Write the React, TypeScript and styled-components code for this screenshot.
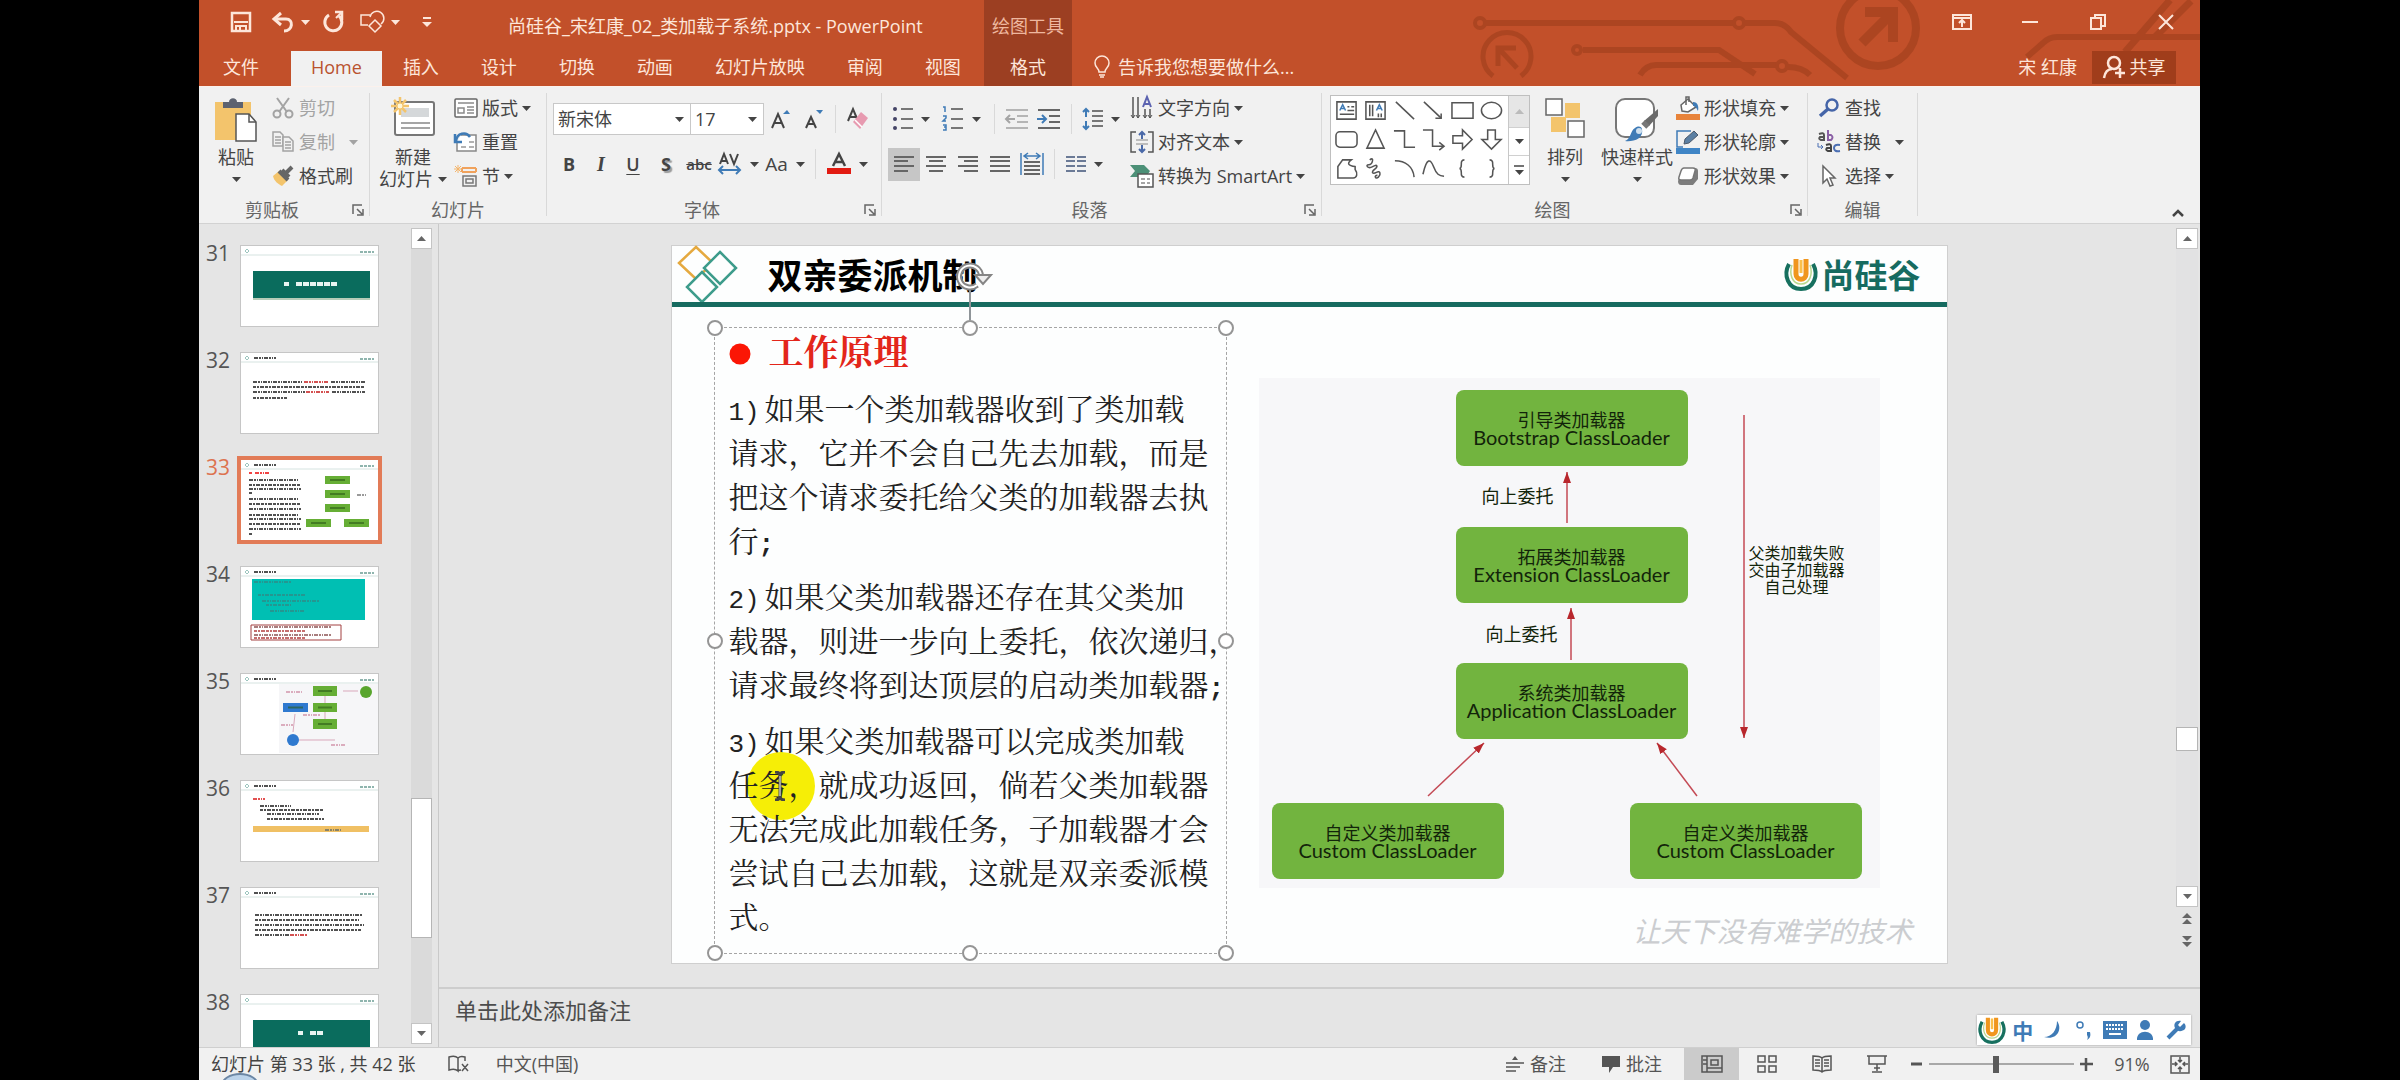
import React from "react";
import styled, { createGlobalStyle, css } from "styled-components";

const UI = `"Open Sans", "Noto Sans CJK SC", sans-serif`;
const CJK = `"Noto Sans CJK SC", sans-serif`;
const SONG = `"Liberation Serif", "Noto Serif CJK SC", "Noto Sans CJK SC", serif`;
const MONO = `"Liberation Mono", monospace`;

const c = {
  brand: "#c2502a",
  brandDark: "#9c3f22",
  share: "#a03d1b",
  onBrand: "#fde6da",
  ribbon: "#f1f1f1",
  ink: "#444444",
  muted: "#a3a3a3",
  line: "#d2d2d2",
  pane: "#e5e5e5",
  blue: "#3f7bb6",
  amber: "#f3c46c",
  teal: "#166b60",
  green: "#72b43f",
};

const Global = createGlobalStyle`
  html, body, #root { margin: 0; height: 100%; }
  body { background: #000; }
  *, *::before, *::after { box-sizing: border-box; }
  button, input, select, textarea {
    font: inherit; color: inherit; margin: 0; padding: 0; border: 0; background: none; border-radius: 0; outline: 0;
  }
`;

const Screen = styled.div`
  height: 100vh;
  padding: 0 200px 0 199px;
  display: flex;
`;
const Window = styled.div`
  flex: 1;
  min-width: 0;
  display: flex;
  flex-direction: column;
  position: relative;
  overflow: hidden;
  background: ${c.ribbon};
  color: ${c.ink};
  font: 18px/24px ${UI};
`;

/* ---------- small shared drawings ---------- */
const Svg = styled.svg`
  display: block;
  flex: none;
  overflow: visible;
  fill: none;
  stroke: currentColor;
`;
const I = ({ w = 24, h = 24, children }: { w?: number; h?: number; children: React.ReactNode }) => (
  <Svg width={w} height={h} viewBox={`0 0 ${w} ${h}`} aria-hidden="true">
    {children}
  </Svg>
);
const Caret = ({ up = false }: { up?: boolean }) => (
  <I w={9} h={5}>
    <path d={up ? "M0 5h9L4.500 0z" : "M0 0h9L4.500 5z"} fill="currentColor" stroke="none" />
  </I>
);

/* ---------- title bar ---------- */
const Header = styled.header`
  position: relative;
  background: ${c.brand};
  color: ${c.onBrand};
  height: 86px;
  display: grid;
  grid-template-columns: 785px 88px 1fr;
  flex: none;
`;
const Circuit = styled.svg`
  position: absolute;
  right: 0;
  top: 0;
  fill: none;
  stroke: #a5421f;
  opacity: 0.75;
`;
const HeaderCol = styled.div<{ $dark?: boolean }>`
  position: relative;
  display: grid;
  grid-template-rows: 51px 35px;
  min-width: 0;
  ${(p) => p.$dark && css`background: ${c.brandDark};`}
`;
const TitleRow = styled.div<{ $end?: boolean; $center?: boolean }>`
  display: flex;
  align-items: center;
  ${(p) => p.$end && css`justify-content: flex-end;`}
  ${(p) => p.$center && css`justify-content: center;`}
`;
const Quick = styled.div`
  display: flex;
  align-items: center;
  padding: 0 0 7px 31px;
  width: 309px;
`;
const QuickBtn = styled.button<{ $w: number }>`
  width: ${(p) => p.$w}px;
  height: 30px;
  display: flex;
  align-items: center;
  gap: 7px;
`;
const DocTitle = styled.h1`
  margin: 0;
  font-size: 18px;
  font-weight: 400;
  line-height: 24px;
  white-space: nowrap;
`;
const ToolsTitle = styled.span`
  color: #eeb79f;
  font-size: 18px;
`;
const WinBtn = styled.button`
  width: 68px;
  height: 44px;
  display: grid;
  place-items: center;
  margin-bottom: 7px;
`;
const Tabs = styled.nav`
  display: flex;
`;
const Tab = styled.button<{ $active?: boolean; $first?: boolean; $wide?: boolean }>`
  padding: 0 21px 3px;
  white-space: nowrap;
  ${(p) => p.$first && css`padding: 0 32px 3px 24px;`}
  ${(p) => p.$wide && css`padding: 0 20px 3px; width: 100%;`}
  ${(p) => p.$active && css`padding: 0 20px 3px; background: ${c.ribbon}; color: #b9532f;`}
`;
const Tell = styled.label`
  display: flex;
  align-items: center;
  gap: 8px;
  padding: 0 0 3px 22px;
`;
const TellInput = styled.input`
  width: 190px;
  &::placeholder { color: ${c.onBrand}; opacity: 1; }
`;
const Account = styled.div`
  margin-left: auto;
  display: flex;
  align-items: stretch;
  padding-right: 24px;
`;
const User = styled.button`
  padding: 0 15px 3px;
`;
const Share = styled.button`
  background: ${c.share};
  width: 84px;
  height: 33px;
  padding-bottom: 2px;
  display: flex;
  align-items: center;
  justify-content: center;
  gap: 5px;
`;

/* ---------- ribbon ---------- */
const Ribbon = styled.section`
  height: 138px;
  flex: none;
  display: flex;
  background: ${c.ribbon};
  border-top: 1px solid #fbf1ec;
  border-bottom: 1px solid ${c.line};
`;
const Rule = styled.i<{ $h?: number }>`
  flex: none;
  width: 1px;
  background: #d9d9d9;
  margin: ${(p) => (p.$h ? "0 6px" : "6px 0 7px")};
  height: ${(p) => (p.$h ? `${p.$h}px` : "auto")};
`;
const Group = styled.div<{ $w: number }>`
  width: ${(p) => p.$w}px;
  flex: none;
  display: flex;
  flex-direction: column;
`;
const Body = styled.div<{ $left: number; $gap?: number }>`
  flex: 1;
  display: flex;
  align-items: flex-start;
  gap: ${(p) => p.$gap ?? 0}px;
  padding: 4px 0 0 ${(p) => p.$left}px;
`;
const Foot = styled.div`
  height: 27px;
  display: flex;
  align-items: center;
  color: #666;
  span { flex: 1; text-align: center; }
`;
const Launcher = styled.button`
  width: 24px;
  height: 24px;
  display: grid;
  place-items: center end;
  padding-right: 5px;
`;
const Big = styled.button<{ $w: number }>`
  width: ${(p) => p.$w}px;
  padding-top: 7px;
  display: flex;
  flex-direction: column;
  align-items: center;
  line-height: 22px;
  white-space: nowrap;
`;
const BigIcon = styled.span`
  height: 48px;
`;
const BigLine = styled.span`
  height: 22px;
  display: flex;
  align-items: center;
  gap: 5px;
`;
const Stack = styled.div`
  display: grid;
  grid-auto-rows: 34px;
  justify-items: start;
`;
const Small = styled.button<{ $off?: boolean; $far?: boolean }>`
  display: grid;
  grid-template-columns: 24px auto auto;
  align-items: center;
  column-gap: 4px;
  white-space: nowrap;
  color: ${(p) => (p.$off ? c.muted : c.ink)};
  > svg:first-child { justify-self: center; }
  > svg:last-child { margin-left: ${(p) => (p.$far ? 10 : 0)}px; }
`;
const Rows = styled.div<{ $w?: number }>`
  padding-top: 12px;
  display: grid;
  grid-template-rows: 32px 34px;
  row-gap: 12px;
  ${(p) => p.$w && css`width: ${p.$w}px;`}
`;
const Row = styled.div`
  display: flex;
  align-items: center;
`;
const Tool = styled.button<{ $w?: number; $on?: boolean }>`
  width: ${(p) => p.$w ?? 32}px;
  height: 33px;
  flex: none;
  display: flex;
  align-items: center;
  justify-content: center;
  gap: 8px;
  font-weight: 600;
  ${(p) => p.$on && css`background: #c6c6c6;`}
`;
const Glyph = styled.span<{ $k: string }>`
  font-size: 18px;
  ${(p) => p.$k === "b" && css`font-weight: 700;`}
  ${(p) => p.$k === "i" && css`font-family: "Liberation Serif", serif; font-style: italic; font-size: 20px; font-weight: 700;`}
  ${(p) => p.$k === "u" && css`text-decoration: underline; text-underline-offset: 3px;`}
  ${(p) => p.$k === "s" && css`font-weight: 700; text-shadow: 2px 2px 1px #999;`}
  ${(p) => p.$k === "x" && css`text-decoration: line-through; font-size: 15px;`}
  ${(p) => p.$k === "a" && css`font-weight: 400; font-size: 19px;`}
`;
const Combo = styled.span<{ $w: number }>`
  width: ${(p) => p.$w}px;
  height: 32px;
  display: grid;
  align-items: center;
  background: #fff;
  border: 1px solid #c8c8c8;
  margin-right: -1px;
  > * { grid-area: 1 / 1; }
  > svg { justify-self: end; margin-right: 6px; pointer-events: none; }
`;
const Select = styled.select`
  appearance: none;
  width: 100%;
  height: 30px;
  padding-left: 4px;
`;
const Gallery = styled.div`
  margin-top: 4px;
  width: 200px;
  height: 90px;
  display: grid;
  grid-template-columns: 1fr 21px;
  background: #fff;
  border: 1px solid #bfbfbf;
`;
const Shapes = styled.div`
  display: grid;
  grid-template-columns: repeat(6, 29px);
  grid-auto-rows: 29px;
  padding-left: 1px;
  color: #555;
`;
const ShapeBtn = styled.button`
  display: grid;
  place-items: center;
`;
const Pager = styled.div`
  display: grid;
  grid-template-rows: 31px 28px 29px;
  border-left: 1px solid #c8c8c8;
  button { display: grid; place-items: center; align-content: center; row-gap: 3px; border-top: 1px solid #d0d0d0; }
  button:first-child { background: #e6e6e6; color: #bbb; border-top: 0; }
`;
const Collapse = styled.button`
  margin: auto 16px 6px auto;
`;

/* ---------- workspace ---------- */
const Work = styled.main`
  flex: 1;
  min-height: 0;
  display: flex;
  background: ${c.pane};
`;
const Pane = styled.aside`
  width: 240px;
  flex: none;
  display: flex;
  border-right: 1px solid #c9c9c9;
  overflow: hidden;
`;
const List = styled.ol`
  flex: 1;
  margin: 0;
  padding: 22px 0 0 7px;
  list-style: none;
  display: grid;
  grid-auto-rows: 80px;
  row-gap: 27px;
  overflow: hidden;
`;
const Item = styled.li<{ $on?: boolean }>`
  display: grid;
  grid-template-columns: 35px 137px;
  color: ${(p) => (p.$on ? "#dd7350" : "#555")};
  font-size: 21px;
  line-height: 14px;
  > svg { background: #fff; outline: ${(p) => (p.$on ? "4px solid #e27b57" : "1px solid #c6c6c6")}; }
`;
const Bar = styled.div<{ $side?: boolean }>`
  width: ${(p) => (p.$side ? 21 : 22)}px;
  flex: none;
  display: flex;
  flex-direction: column;
  margin: ${(p) => (p.$side ? "4px 6px 3px 0" : "4px 2px 34px 0")};
`;
const Track = styled.div<{ $side?: boolean }>`
  flex: 1;
  display: flex;
  flex-direction: column;
  background: ${(p) => (p.$side ? "#dadada" : "#e2e2e3")};
`;
const Space = styled.i<{ $n: number }>`
  flex: ${(p) => p.$n} 0 0;
`;
const Thumb = styled.i<{ $h: number }>`
  height: ${(p) => p.$h}px;
  background: #fff;
  border: 1px solid #b5b5b5;
`;
const Arrow = styled.button<{ $plain?: boolean }>`
  height: ${(p) => (p.$plain ? 23 : 21)}px;
  display: grid;
  place-items: center;
  align-content: center;
  color: #666;
  ${(p) => !p.$plain && css`background: #fff; border: 1px solid #c4c4c4;`}
`;
const Right = styled.div`
  flex: 1;
  min-width: 0;
  display: flex;
  flex-direction: column;
`;
const Editor = styled.div`
  flex: 1;
  min-height: 0;
  display: flex;
`;
const Stage = styled.div`
  flex: 1;
  display: grid;
  place-items: center;
  padding: 0 0 2px 3px;
`;
const Notes = styled.div`
  height: 60px;
  flex: none;
  border-top: 2px solid #cdcdcd;
  padding: 3px 16px 0;
`;
const NotesBox = styled.textarea`
  display: block;
  width: 100%;
  height: 34px;
  resize: none;
  font: 22px/34px ${CJK};
  &::placeholder { color: #4c4c4c; opacity: 1; }
`;

/* ---------- slide ---------- */
const Slide = styled.article`
  width: 1275px;
  height: 717px;
  background: #fdfefe;
  box-shadow: 0 0 0 1px #cfcfcf;
  display: grid;
  grid-template-rows: 56px 5px 1fr;
  font-family: ${CJK};
  color: #222;
`;
const SlideHead = styled.div`
  display: flex;
  align-items: center;
  gap: 30px;
  padding: 0 26px 0 6px;
`;
const SlideTitle = styled.h2`
  margin: 0;
  font-size: 35px;
  line-height: 44px;
  font-weight: 700;
  color: #000;
`;
const Brand = styled.div`
  margin-left: auto;
  display: flex;
  align-items: center;
  gap: 4px;
  color: ${c.teal};
  font-size: 33px;
  line-height: 40px;
  font-weight: 700;
`;
const Stripe = styled.i`
  background: ${c.teal};
`;
const SlideBody = styled.div`
  display: flex;
`;
const TextBox = styled.div`
  position: relative;
  margin: 20px 0 0 42px;
  width: 513px;
  height: 627px;
  padding: 4px 0 0 14px;
  border: 1px dashed #a5a5a5;
  display: flex;
  flex-direction: column;
  gap: 12px;
  font: 30px/44px ${SONG};
`;
const Heading = styled.h3`
  margin: 0;
  display: grid;
  grid-template-columns: 40px auto;
  align-items: center;
  font: 700 35px/44px ${SONG};
  color: #e3261b;
`;
const Para = styled.p`
  margin: 0;
`;
const Line = styled.span`
  position: relative;
  display: block;
  height: 44px;
  white-space: nowrap;
`;
const Num = styled.span`
  display: inline-block;
  width: 36px;
  font-family: ${MONO};
  font-size: 26px;
`;
const Semi = styled.span`
  font-family: ${MONO};
  font-size: 26px;
  font-weight: 700;
`;
const Handle = styled.i<{ $x: number; $y: number }>`
  position: absolute;
  left: ${(p) => p.$x}%;
  top: ${(p) => p.$y}%;
  width: 16px;
  height: 16px;
  margin: -8px;
  border: 2px solid #959595;
  border-radius: 50%;
  background: #fff;
`;
const Rotate = styled.svg`
  position: absolute;
  left: 50%;
  top: -66px;
  margin-left: -15px;
  overflow: visible;
  fill: none;
`;
const Spot = styled.i`
  position: absolute;
  left: 18px;
  top: -12px;
  width: 68px;
  height: 68px;
  border-radius: 50%;
  background: #f6ee06;
`;
const Over = styled.span`
  position: relative;
`;
const Beam = styled.svg`
  position: absolute;
  left: 44px;
  top: 7px;
  fill: none;
`;
const RightSide = styled.div`
  margin: 71px 0 0 32px;
  width: 654px;
`;
const Diagram = styled.div`
  position: relative;
  width: 621px;
  height: 510px;
  background: #f7f7f9;
  color: #12240a;
`;
const Node = styled.div<{ $x: number; $y: number }>`
  position: absolute;
  left: ${(p) => p.$x}px;
  top: ${(p) => p.$y}px;
  width: 232px;
  height: 76px;
  border-radius: 8px;
  background: ${c.green};
  display: grid;
  align-content: center;
  text-align: center;
  font: 18px/18px ${CJK};
  white-space: nowrap;
  span { font-family: Lato, sans-serif; font-size: 20px; }
`;
const Note = styled.div<{ $x: number; $y: number; $s: number }>`
  position: absolute;
  left: ${(p) => p.$x}px;
  top: ${(p) => p.$y}px;
  font-size: ${(p) => p.$s}px;
  line-height: 17px;
  text-align: center;
  white-space: nowrap;
`;
const Arrows = styled.svg`
  position: absolute;
  left: 0;
  top: 0;
`;
const Motto = styled.p`
  margin: 24px 0 0;
  text-align: right;
  font: italic 28px/36px ${CJK};
  color: #cbcdd0;
`;

/* ---------- status bar ---------- */
const Status = styled.footer`
  height: 33px;
  flex: none;
  display: flex;
  align-items: center;
  padding: 0 10px 0 12px;
  border-top: 1px solid #cfcfcf;
  background: ${c.ribbon};
  white-space: nowrap;
  font-size: 18px;
`;
const StatusText = styled.span<{ $w: number }>`
  width: ${(p) => p.$w}px;
`;
const StatusBtn = styled.button<{ $w: number; $on?: boolean }>`
  width: ${(p) => p.$w}px;
  align-self: stretch;
  display: flex;
  align-items: center;
  justify-content: center;
  gap: 6px;
  color: #555;
  ${(p) => p.$on && css`background: #cbcbcb;`}
`;
const Push = styled.i`
  flex: 1;
`;
const Zoom = styled.input`
  appearance: none;
  width: 145px;
  height: 20px;
  margin: 0 5px 0 2px;
  background: linear-gradient(#a8a8a8, #a8a8a8) center / 100% 2px no-repeat;
  &::-webkit-slider-thumb {
    appearance: none;
    width: 6px;
    height: 17px;
    background: #5a5a5a;
  }
`;
const Ime = styled.div`
  position: absolute;
  right: 9px;
  bottom: 35px;
  width: 214px;
  height: 30px;
  display: grid;
  grid-template-columns: repeat(7, 1fr);
  place-items: center;
  background: #fff;
  box-shadow: 0 0 2px #999;
  color: ${c.blue};
  font: 700 21px/28px ${CJK};
`;
const Orb = styled.i`
  position: absolute;
  left: 22px;
  bottom: -18px;
  width: 38px;
  height: 25px;
  border-radius: 50%;
  border: 2px solid #6c87a5;
  background: #bcd3ea;
`;

const ULogo = ({ s }: { s: number }) => (
  <Svg width={s} height={s} viewBox="0 0 34 34" aria-hidden="true">
    <path d="M5 7C-1 18 4 32 17 32S35 18 29 7" stroke="#17705f" strokeWidth="4" />
    <path d="M8 8c-3 9 0 19 9 19s12-10 9-19" stroke="#b8d78e" strokeWidth="1.500" />
    <path d="M12 2v15c0 7 10 7 10 0V2" stroke="#f0961e" strokeWidth="5" />
    <path d="M17 3v13" stroke="#fbc04c" strokeWidth="3" />
  </Svg>
);

const AlignIcon = ({ kind }: { kind: "l" | "c" | "r" | "j" }) => (
  <I w={22} h={16}>
    {[1, 5, 10, 15].map((y, i) => {
      const short = i % 2 === 1 && kind !== "j";
      const x1 = !short || kind === "l" ? 1 : kind === "c" ? 4 : 7;
      const x2 = !short || kind === "r" ? 21 : kind === "c" ? 18 : 15;
      return <path key={y} d={`M${x1} ${y}H${x2}`} strokeWidth="2" stroke="#666" />;
    })}
  </I>
);

const shapes: [string, React.ReactNode][] = [
  ["文本框", <><path d="M2 3h20v18H2zM13 8h2M17 8h3M13 12h7M5 16h15" /><path d="M5 12l3-6 3 6M6 10h4" stroke={c.blue} /></>],
  ["竖排文本框", <><path d="M2 3h20v18H2zM6 6v12M9 6v12M15 15v4M18 15v4" /><path d="M13 12l3-6 3 6M14 10h4" stroke={c.blue} /></>],
  ["直线", <path d="M3 3l19 18" />],
  ["箭头", <><path d="M2 3l18 17" /><path d="M20 15v5h-6" /></>],
  ["矩形", <path d="M1 4h22v16H1z" />],
  ["椭圆", <ellipse cx="12" cy="12" rx="10.500" ry="8.500" />],
  ["圆角矩形", <rect x="1" y="4" width="22" height="16" rx="4" />],
  ["三角形", <path d="M12 2l9 19H3z" />],
  ["肘形连接符", <path d="M1 3h11v17h11" />],
  ["肘形箭头", <path d="M1 2h10v17h11M18 15l5 4-5 4" />],
  ["右箭头", <path d="M2 8h10V2l10 10-10 10v-6H2z" />],
  ["下箭头", <path d="M8 2h8v10h6L12 22 2 12h6z" />],
  ["任意多边形", <path d="M3 22V10l5-7h9c-5 4-3 6 4 7v3c3 4 2 9-2 9z" />],
  ["自由曲线", <path d="M6 3c5-4 3 5-1 5s-1 5 4 2 6 0 2 3-2 5 2 3 5 2 2 5-5-2-1-2" />],
  ["弧形", <path d="M2 4c11 0 19 6 20 17" />],
  ["曲线", <path d="M1 18C5 0 9 2 12 10s6 10 11 10" />],
  ["左大括号", <path d="M14 3c-6 0-1 8-5 9 4 1-1 9 5 9" />],
  ["右大括号", <path d="M10 3c6 0 1 8 5 9-4 1 1 9-5 9" />],
];

/* ---------- miniature slides ---------- */
const dash = (y: number, x1: number, x2: number, color = "#333", k = 0) => (
  <path key={`${y}-${x1}`} d={`M${x1} ${y}H${x2}`} stroke={color} strokeWidth="2" strokeDasharray={k % 2 ? "3 1 2 1 4 1" : "4 1 2 1 1 1"} opacity="0.85" />
);
const miniHead = (titled: boolean) => (
  <>
    <path d="M4 5l2-2 2 2-2 2z" stroke="#9cc5be" strokeWidth="1" />
    {titled && dash(5, 13, 35)}
    <path d="M119 6h14" stroke="#8fb5ae" strokeWidth="2" strokeDasharray="3 1" />
    <path d="M0 9h137" stroke="#d5e3e0" strokeWidth="1" />
  </>
);
const banner = (x: number, w: number) => (
  <>
    {miniHead(false)}
    <rect x="12" y="25" width="117" height="27" fill="#0a6c5d" stroke="none" />
    <path d="M12 53h117" stroke="#b6ccb8" strokeWidth="2" />
    <path d={`M${x} 38h5M${x + 12} 38h${w}`} stroke="#e8f5f1" strokeWidth="4" strokeDasharray="6 1" />
  </>
);
const box = (x: number, y: number, w: number, h: number, fill = "#66ae35") => (
  <g key={`${x}${y}`}>
    <rect x={x} y={y} width={w} height={h} fill={fill} stroke="none" />
    <path d={`M${x + 5} ${y + h / 2}h${w - 10}`} stroke="#2b5a17" strokeWidth="2" opacity="0.6" />
  </g>
);
const minis: [number, React.ReactNode][] = [
  [31, banner(43, 42)],
  [32, <>{miniHead(true)}{dash(29, 12, 62)}{dash(29, 63, 88, "#c33")}{dash(29, 90, 124)}{dash(34, 12, 123, "#333", 1)}{dash(39, 12, 64)}{dash(39, 65, 88, "#c33")}{dash(39, 91, 124)}{dash(45, 12, 46, "#333", 1)}</>],
  [33, <>{miniHead(true)}
    {dash(13, 8, 11, "#e22")}{dash(13, 14, 29, "#e22")}
    {[[20, 57], [25, 60], [29, 60], [33, 12], [39, 57], [44, 60], [49, 60], [55, 57], [59, 60], [64, 60], [69, 60], [74, 12]].map(([y, x], k) => dash(y, 8, x, "#333", k))}
    {[[84, 16], [84, 30], [84, 44], [65, 59], [103, 59]].map(([x, y]) => box(x, y, 25, 8))}
    {dash(35, 116, 126, "#888")}</>],
  [34, <>{miniHead(true)}<rect x="11" y="12" width="113" height="41" fill="#00bfb3" stroke="none" />
    {[15, 28, 34, 38, 44].map((y, k) => dash(y, 13 + k * 4, 50 + (k % 3) * 14, "#2a8f8b", k))}
    <path d="M10 58h90v15H10z" stroke="#a34040" strokeWidth="1" />
    {[60, 64, 68, 71].map((y, k) => dash(y, 13, 90 - (k % 2) * 25, k % 2 ? "#b55" : "#966", k))}</>],
  [35, <>{miniHead(true)}<rect x="38" y="10" width="99" height="69" fill="#f6f6f8" stroke="none" />
    {box(72, 12, 24, 10)}{box(72, 29, 24, 9)}{box(72, 45, 24, 10)}{box(42, 29, 25, 9, "#2f79cf")}
    <circle cx="125" cy="18" r="6" fill="#58a52d" stroke="none" /><circle cx="52" cy="66" r="6" fill="#2f79cf" stroke="none" />
    <path d="M84 22v7M84 38v7M102 17h15M58 66h36M54 40l-2 18" stroke="#d9a8bb" strokeWidth="1" />
    {dash(18, 45, 61, "#d6a0b4")}{dash(51, 40, 52, "#d6a0b4")}{dash(41, 62, 80, "#d6a0b4")}{dash(71, 90, 104, "#d6a0b4")}</>],
  [36, <>{miniHead(true)}{dash(18, 12, 24, "#d33")}{dash(25, 19, 50)}{dash(29, 19, 83, "#333", 1)}{dash(33, 26, 78)}{dash(38, 26, 83, "#333", 1)}
    <rect x="12" y="45" width="116" height="6" fill="#f0c064" stroke="none" />{dash(49, 84, 100, "#776")}</>],
  [37, <>{miniHead(true)}{[[27, 122], [32, 118], [37, 123], [42, 120]].map(([y, x], k) => dash(y, 14, x, "#333", k))}{dash(47, 14, 48)}{dash(47, 49, 66, "#c33")}</>],
  [38, banner(57, 14)],
];

const CircuitArt = () => (
  <Circuit width="740" height="86" viewBox="0 0 740 86" strokeWidth="6" aria-hidden="true">
    <circle cx="20" cy="23" r="5" strokeWidth="4" />
    <path d="M26 23h247" />
    <circle cx="279" cy="23" r="5" strokeWidth="4" />
    <path d="M285 23h30q10 0 16 9l56 46" />
    <path d="M33 76a24 24 0 1 1 28 0" strokeWidth="5" />
    <path d="M57 68L40 50M38 66V48h18" strokeWidth="5" />
    <circle cx="117" cy="50" r="4" strokeWidth="4" />
    <path d="M123 50h136l36 24" />
    <path d="M180 75q6-10 16-10h120" />
    <circle cx="322" cy="66" r="5" strokeWidth="4" />
    <path d="M328 67q14 0 22 8" />
    <circle cx="418" cy="28" r="38" strokeWidth="8" />
    <path d="M402 43l28-28M405 12h28v30" strokeWidth="10" />
    <path d="M567 57l16-14q6-6 14-6h143" />
    <path d="M665 52l45-52M695 37l36-36" strokeWidth="7" />
  </Circuit>
);

const Bars = ({ side = false, a, b, h }: { side?: boolean; a: number; b: number; h: number }) => (
  <Bar $side={side}>
    <Arrow aria-label="向上滚动"><Caret up /></Arrow>
    <Track $side={side}><Space $n={a} /><Thumb $h={h} /><Space $n={b} /></Track>
    <Arrow aria-label="向下滚动"><Caret /></Arrow>
    {!side && (
      <>
        <Arrow $plain aria-label="上一张"><I w={10} h={11}><path d="M0 5l5-5 5 5zM0 11l5-5 5 5z" fill="currentColor" stroke="none" /></I></Arrow>
        <Arrow $plain aria-label="下一张"><I w={10} h={11}><path d="M0 0l5 5 5-5zM0 6l5 5 5-5z" fill="currentColor" stroke="none" /></I></Arrow>
      </>
    )}
  </Bar>
);

const Footer = ({ name, open = true }: { name: string; open?: boolean }) => (
  <Foot>
    <span>{name}</span>
    {open && (
      <Launcher aria-label={`${name}选项`}>
        <I w={12} h={12}><path d="M1 10V1h9M5 5l5 5M11 5v6H5" strokeWidth="1.500" /></I>
      </Launcher>
    )}
  </Foot>
);

const paras: string[][] = [
  ["如果一个类加载器收到了类加载", "请求，它并不会自己先去加载，而是", "把这个请求委托给父类的加载器去执", "行;"],
  ["如果父类加载器还存在其父类加", "载器，则进一步向上委托，依次递归，", "请求最终将到达顶层的启动类加载器;"],
  ["如果父类加载器可以完成类加载", "任务，就成功返回，倘若父类加载器", "无法完成此加载任务，子加载器才会", "尝试自己去加载，这就是双亲委派模", "式。"],
];
const withSemi = (t: string) => (t.endsWith(";") ? <>{t.slice(0, -1)}<Semi>;</Semi></> : t);

const nodes: [number, number, string, string][] = [
  [197, 12, "引导类加载器", "Bootstrap ClassLoader"],
  [197, 149, "拓展类加载器", "Extension ClassLoader"],
  [197, 285, "系统类加载器", "Application ClassLoader"],
  [13, 425, "自定义类加载器", "Custom ClassLoader"],
  [371, 425, "自定义类加载器", "Custom ClassLoader"],
];
const links: [number, number, number, number][] = [
  [308, 145, 308, 94],
  [312, 282, 312, 230],
  [485, 37, 485, 360],
  [169, 418, 225, 365],
  [438, 418, 398, 365],
];

export default function App() {
  return (
    <Screen>
      <Global />
      <Window>
        <Header>
          <CircuitArt />
          <HeaderCol>
            <TitleRow>
              <Quick>
                <QuickBtn $w={42} aria-label="保存">
                  <I w={22} h={22}><path d="M2 2h18v18H2z" strokeWidth="2.500" /><path d="M4 11h14M6 20v-5h10v5M10 16v4" strokeWidth="2" /></I>
                </QuickBtn>
                <QuickBtn $w={52} aria-label="撤消">
                  <I w={22} h={22}><path d="M3 8h11c8 0 7 12-2 12" strokeWidth="3" /><path d="M9 2L2 8l7 6" strokeWidth="3" /></I>
                  <Caret />
                </QuickBtn>
                <QuickBtn $w={36} aria-label="恢复">
                  <I w={20} h={22}><path d="M5 4a8.500 8.500 0 1 0 10 1" strokeWidth="3" /><path d="M11 1h7v8" strokeWidth="2.500" /><path d="M18 1l-6 6" strokeWidth="2" /></I>
                </QuickBtn>
                <QuickBtn $w={62} aria-label="形状">
                  <I w={24} h={22}><path d="M8 14H1V4h9" strokeWidth="1.500" /><path d="M10 6a7 7 0 1 1 11 7" strokeWidth="1.500" /><path d="M15 9l6 6-6 6-6-6z" strokeWidth="1.500" /></I>
                  <Caret />
                </QuickBtn>
                <QuickBtn $w={20} aria-label="自定义快速访问工具栏">
                  <I w={10} h={10}><path d="M1 1h8" strokeWidth="2" /><path d="M0 5h10l-5 5z" fill="currentColor" stroke="none" /></I>
                </QuickBtn>
              </Quick>
              <DocTitle>尚硅谷_宋红康_02_类加载子系统.pptx - PowerPoint</DocTitle>
            </TitleRow>
            <Tabs>
              <Tab $first>文件</Tab>
              <Tab $active>Home</Tab>
              {["插入", "设计", "切换", "动画", "幻灯片放映", "审阅", "视图"].map((t) => <Tab key={t}>{t}</Tab>)}
            </Tabs>
          </HeaderCol>
          <HeaderCol $dark>
            <TitleRow $center><ToolsTitle>绘图工具</ToolsTitle></TitleRow>
            <Tab $wide>格式</Tab>
          </HeaderCol>
          <HeaderCol>
            <TitleRow $end>
              <WinBtn aria-label="功能区显示选项"><I w={20} h={16}><path d="M1 1h18v14H1zM1 4h18M10 13V7M7 9l3-3 3 3" strokeWidth="2" /></I></WinBtn>
              <WinBtn aria-label="最小化"><I w={16} h={4}><path d="M0 2h16" strokeWidth="2" /></I></WinBtn>
              <WinBtn aria-label="还原"><I w={16} h={16}><path d="M1 4h10v11H1zM5 4V1h10v11h-4" strokeWidth="2" /></I></WinBtn>
              <WinBtn aria-label="关闭"><I w={16} h={16}><path d="M1 1l14 14M15 1L1 15" strokeWidth="2" /></I></WinBtn>
            </TitleRow>
            <Tabs>
              <Tell>
                <I w={16} h={22}><path d="M5 16c0-4-4-4-4-9a7 7 0 0 1 14 0c0 5-4 5-4 9zM5 19h6M6 21h4" strokeWidth="1.500" /></I>
                <TellInput aria-label="告诉我您想要做什么" placeholder="告诉我您想要做什么..." />
              </Tell>
              <Account>
                <User>宋 红康</User>
                <Share>
                  <I w={22} h={24}><circle cx="11" cy="8" r="6" strokeWidth="2.500" /><path d="M1 23c1-6 4-9 8-9M17 13v10M12 18h10" strokeWidth="2.500" /></I>
                  共享
                </Share>
              </Account>
            </Tabs>
          </HeaderCol>
        </Header>

        <Ribbon>
          <Group $w={170}>
            <Body $left={12} $gap={10}>
              <Big $w={50}>
                <BigIcon>
                  <I w={42} h={44}>
                    <rect x="0" y="4" width="36" height="38" fill={c.amber} stroke="none" />
                    <path d="M8 10V4h6c0-5 8-5 8 0h6v6z" fill="#5c6270" stroke="none" />
                    <path d="M21 16h13l7 8v19H21z" fill="#fff" stroke="#555" strokeWidth="1.500" /><path d="M34 16v8h7" stroke="#555" strokeWidth="1.500" />
                  </I>
                </BigIcon>
                <BigLine>粘贴</BigLine><BigLine><Caret /></BigLine>
              </Big>
              <Stack>
                <Small $off>
                  <I w={22} h={22}><path d="M5 1l10 14M17 1L7 15" strokeWidth="2" /><circle cx="5" cy="17" r="3.500" strokeWidth="2" /><circle cx="17" cy="17" r="3.500" strokeWidth="2" /></I>
                  剪切
                </Small>
                <Small $off $far>
                  <I w={22} h={22}><path d="M1 1h7l3 3v11H1zM3 6h6M3 9h6M3 12h6" strokeWidth="1.500" /><path d="M11 6h6l4 4v10H11z" fill="#f1f1f1" strokeWidth="1.500" /><path d="M13 11h6M13 14h6M13 17h6" strokeWidth="1.500" /></I>
                  复制<Caret />
                </Small>
                <Small>
                  <I w={22} h={22}><path d="M1 11l6-5 9 9-6 6c-4-2-8-5-9-10z" fill={c.amber} stroke="none" /><path d="M7 6l9 9M10 5l7 7M13 9l7-7" stroke="#666" strokeWidth="4" /></I>
                  格式刷
                </Small>
              </Stack>
            </Body>
            <Footer name="剪贴板" />
          </Group>
          <Rule />
          <Group $w={176}>
            <Body $left={8} $gap={6}>
              <Big $w={70}>
                <BigIcon>
                  <I w={44} h={44}>
                    <rect x="4" y="4" width="39" height="33" rx="2" fill="#fff" stroke="#777" strokeWidth="2" />
                    <rect x="10" y="10" width="28" height="9" fill="#d5d8da" stroke="none" />
                    <path d="M10 25h29M10 30h29" stroke="#888" strokeWidth="1.500" />
                    <path d="M9-1v18M0 8h18M3 2l12 12M15 2L3 14" stroke={c.amber} strokeWidth="2.500" /><circle cx="9" cy="8" r="3" fill="#fff7d8" stroke={c.amber} />
                  </I>
                </BigIcon>
                <BigLine>新建</BigLine><BigLine>幻灯片<Caret /></BigLine>
              </Big>
              <Stack>
                <Small>
                  <I w={24} h={20}><rect x="1" y="1" width="22" height="18" rx="1" fill="#fff" stroke="#666" strokeWidth="1.500" /><path d="M4 5h16M4 10h6v5H4zM13 9h7M13 12h7M13 15h7" stroke="#8a8a8a" strokeWidth="1.500" /></I>
                  版式<Caret />
                </Small>
                <Small>
                  <I w={24} h={22}><path d="M7 4h15v16H3v-8" fill="#fff" stroke="#888" strokeWidth="1.500" /><path d="M7 16h5M15 11h5M15 16h5" stroke="#999" strokeWidth="1.500" /><path d="M2 10C3 2 12 0 16 6" stroke={c.blue} strokeWidth="2.500" /><path d="M1 3v8h7" stroke={c.blue} strokeWidth="2.500" /></I>
                  重置
                </Small>
                <Small>
                  <I w={24} h={22}><path d="M8 3h14M8 7h14M8 3v4M22 3v4" stroke="#f0a25c" strokeWidth="2" /><path d="M4 0v8M0 4h8M1 1l6 6M7 1L1 7" stroke="#f3b56c" /><path d="M9 11h13v10H9zM12 14h7v4h-7z" stroke="#777" strokeWidth="1.500" /></I>
                  节<Caret />
                </Small>
              </Stack>
            </Body>
            <Footer name="幻灯片" open={false} />
          </Group>
          <Rule />
          <Group $w={334}>
            <Body $left={6}>
              <Rows>
                <Row>
                  <Combo $w={138}><Select aria-label="字体"><option>新宋体</option></Select><Caret /></Combo>
                  <Combo $w={74}><Select aria-label="字号"><option>17</option></Select><Caret /></Combo>
                  <Tool $w={36} aria-label="增大字号"><I w={20} h={20}><path d="M1 19L7 5l6 14M3 14h8" strokeWidth="2" /><path d="M12 5h7l-3-4z" fill={c.blue} stroke="none" /></I></Tool>
                  <Tool $w={30} aria-label="减小字号"><I w={20} h={20}><path d="M2 19L7 8l5 11M4 15h6" strokeWidth="2" /><path d="M12 1h7l-3 4z" fill={c.blue} stroke="none" /></I></Tool>
                  <Rule $h={28} />
                  <Tool aria-label="清除格式"><I w={22} h={22}><path d="M1 13L6 1l5 12M3 9h6" strokeWidth="2" /><path d="M14 4l7 6-8 11-7-7z" fill="#e79ab0" stroke="none" /><path d="M8 12l7 7" stroke="#fff" strokeWidth="1.500" /></I></Tool>
                </Row>
                <Row>
                  <Tool aria-label="加粗"><Glyph $k="b">B</Glyph></Tool>
                  <Tool aria-label="倾斜"><Glyph $k="i">I</Glyph></Tool>
                  <Tool aria-label="下划线"><Glyph $k="u">U</Glyph></Tool>
                  <Tool $w={34} aria-label="文字阴影"><Glyph $k="s">S</Glyph></Tool>
                  <Tool aria-label="删除线"><Glyph $k="x">abc</Glyph></Tool>
                  <Tool $w={46} aria-label="字符间距">
                    <I w={24} h={24}><path d="M2 12l4-10 4 10M3 9h6M12 2l4 10 4-10" strokeWidth="2" /><path d="M1 18h21M5 14l-4 4 4 4M18 14l4 4-4 4" stroke={c.blue} strokeWidth="2" /></I>
                    <Caret />
                  </Tool>
                  <Tool $w={48} aria-label="更改大小写"><Glyph $k="a">Aa</Glyph><Caret /></Tool>
                  <Rule $h={30} />
                  <Tool $w={50} aria-label="字体颜色">
                    <I w={24} h={22}><path d="M6 13l6-12 6 12M8 9h8" strokeWidth="2.500" /><rect x="0" y="15" width="24" height="6" fill="#e21b12" stroke="none" /></I>
                    <Caret />
                  </Tool>
                </Row>
              </Rows>
            </Body>
            <Footer name="字体" />
          </Group>
          <Rule />
          <Group $w={439}>
            <Body $left={6}>
              <Rows $w={242}>
                <Row>
                  <Tool $w={46} aria-label="项目符号">
                    <I w={20} h={24}><path d="M8 2h12M8 12h12M8 21h12" strokeWidth="2" stroke="#777" /><circle cx="2" cy="2" r="2" fill="#446" stroke="none" /><circle cx="2" cy="12" r="2" fill="#446" stroke="none" /><circle cx="2" cy="21" r="2" fill="#446" stroke="none" /></I>
                    <Caret />
                  </Tool>
                  <Tool $w={54} aria-label="编号">
                    <I w={22} h={24}><path d="M9 2h12M9 12h12M9 21h12" strokeWidth="2" stroke="#777" /><path d="M1 0h2v5M1 9h3v2l-3 3h3M1 18h3v5H1M2 20h2" stroke={c.blue} strokeWidth="1.500" /></I>
                    <Caret />
                  </Tool>
                  <Rule $h={30} />
                  <Tool aria-label="减少缩进"><I w={24} h={20}><path d="M1 1h22M12 7h11M12 13h11M1 19h22" stroke="#b5b5b5" strokeWidth="2" /><path d="M1 10h9M5 6l-4 4 4 4" stroke="#a5a5a5" strokeWidth="2" /></I></Tool>
                  <Tool aria-label="增加缩进"><I w={24} h={20}><path d="M1 1h22M12 7h11M12 13h11M1 19h22" stroke="#666" strokeWidth="2" /><path d="M0 10h9M5 6l4 4-4 4" stroke={c.blue} strokeWidth="2" /></I></Tool>
                  <Rule $h={30} />
                  <Tool $w={46} aria-label="行距">
                    <I w={21} h={22}><path d="M10 3h11M10 8h11M10 13h11M10 18h11" stroke="#777" strokeWidth="2" /><path d="M4 1v8M1 4l3-3 3 3M4 13v8M1 18l3 3 3-3" stroke={c.blue} strokeWidth="2" /></I>
                    <Caret />
                  </Tool>
                </Row>
                <Row>
                  <Tool $on aria-label="左对齐"><AlignIcon kind="l" /></Tool>
                  <Tool aria-label="居中"><AlignIcon kind="c" /></Tool>
                  <Tool aria-label="右对齐"><AlignIcon kind="r" /></Tool>
                  <Tool aria-label="两端对齐"><AlignIcon kind="j" /></Tool>
                  <Tool aria-label="分散对齐"><I w={24} h={24}><path d="M1 1v22M23 1v22" stroke={c.blue} strokeWidth="1.500" /><path d="M4 10h16M4 14h16M4 18h16M4 22h16" stroke="#666" strokeWidth="2" /><path d="M4 4h16M8 1L4 4l4 3M16 1l4 3-4 3" stroke={c.blue} strokeWidth="1.500" /></I></Tool>
                  <Rule $h={30} />
                  <Tool $w={46} aria-label="分栏"><I w={20} h={16}><path d="M0 1h9M0 5h9M0 10h9M0 15h9M11 1h9M11 5h9M11 10h9M11 15h9" stroke="#6b7a96" strokeWidth="2" /></I><Caret /></Tool>
                </Row>
              </Rows>
              <Stack>
                <Small>
                  <I w={22} h={22}><path d="M2 0v21M7 0v21M14 12v9M19 12v9" stroke="#555" strokeWidth="1.500" /><path d="M0 18l2 3 2-3M5 18l2 3 2-3M12 18l2 3 2-3M17 18l2 3 2-3" stroke="#555" /><path d="M12 10l4-10 4 10M13 7h6" stroke="#5b62b0" strokeWidth="2" /></I>
                  文字方向<Caret />
                </Small>
                <Small>
                  <I w={24} h={22}><path d="M6 1H1v20h5M18 1h5v20h-5" stroke="#555" strokeWidth="1.500" /><path d="M6 9h12M6 13h12" stroke="#aaa" strokeWidth="1.500" /><path d="M12 1v7M9 4l3-3 3 3M12 14v7M9 18l3 3 3-3" stroke="#4a69a8" strokeWidth="2" /></I>
                  对齐文本<Caret />
                </Small>
                <Small>
                  <I w={24} h={24}><path d="M0 1h14l6 6-4 6H0l5-6z" fill="#4c9077" stroke="none" /><rect x="8" y="10" width="15" height="13" fill="#fff" stroke="#555" strokeWidth="1.500" /><path d="M11 15h4M17 15h3M11 19h4M17 19h3" stroke="#888" strokeWidth="1.500" /></I>
                  转换为 SmartArt<Caret />
                </Small>
              </Stack>
            </Body>
            <Footer name="段落" />
          </Group>
          <Rule />
          <Group $w={485}>
            <Body $left={8} $gap={2}>
              <Gallery>
                <Shapes>
                  {shapes.map(([n, d]) => (
                    <ShapeBtn key={n} aria-label={n}>
                      <Svg width="23" height="23" viewBox="0 0 24 24" strokeWidth="1.600" aria-hidden="true">{d}</Svg>
                    </ShapeBtn>
                  ))}
                </Shapes>
                <Pager>
                  <button aria-label="上一行"><Caret up /></button>
                  <button aria-label="下一行"><Caret /></button>
                  <button aria-label="其他"><I w={10} h={2}><path d="M0 1h10" strokeWidth="1.500" /></I><Caret /></button>
                </Pager>
              </Gallery>
              <Big $w={66}>
                <BigIcon>
                  <I w={40} h={40}><rect x="20" y="5" width="15" height="15" fill={c.amber} stroke="none" /><rect x="6" y="19" width="15" height="15" fill={c.amber} stroke="none" /><rect x="1" y="1" width="16" height="16" fill="#fff" stroke="#666" strokeWidth="1.500" /><rect x="23" y="23" width="16" height="16" fill="#fff" stroke="#666" strokeWidth="1.500" /></I>
                </BigIcon>
                <BigLine>排列</BigLine><BigLine><Caret /></BigLine>
              </Big>
              <Big $w={74}>
                <BigIcon>
                  <I w={44} h={44}><rect x="1" y="1" width="38" height="38" rx="9" fill="#fff" stroke="#777" strokeWidth="2" /><path d="M43 11v7l-9 10-5-5z" fill="#6b6b6b" stroke="none" /><path d="M28 24l5 5" stroke="#777" strokeWidth="5" /><path d="M27 31c2 10-9 13-17 12 6-2 5-10 10-13 3-2 6-2 7 1z" fill={c.blue} stroke="none" /><circle cx="24" cy="33" r="3" fill="#cfe0ee" stroke="none" /></I>
                </BigIcon>
                <BigLine>快速样式</BigLine><BigLine><Caret /></BigLine>
              </Big>
              <Stack>
                <Small>
                  <I w={24} h={24}><path d="M5 9l7-6 8 8-8 5-6-1z" fill="#fff" stroke="#666" strokeWidth="1.500" /><path d="M10 9V1h3v5" stroke="#666" strokeWidth="1.500" /><path d="M17 6c5 0 6 5 5 9-2-4-3-5-5-5z" fill={c.blue} stroke="none" /><rect x="0" y="18" width="24" height="6" fill="#e8833a" stroke="none" /></I>
                  形状填充<Caret />
                </Small>
                <Small>
                  <I w={24} h={24}><path d="M15 1H1v16h6" stroke={c.blue} strokeWidth="1.500" /><path d="M8 14l1-5 9-8 4 4-9 8z" fill="#5b7fa3" stroke="#4c5a6b" /><rect x="0" y="18" width="24" height="6" fill="#3f85c6" stroke="none" /></I>
                  形状轮廓<Caret />
                </Small>
                <Small>
                  <I w={22} h={22}><path d="M7 3h11q3 0 3 3v8l-5 6H4q-3 0-3-4z" fill="#7d7d7d" stroke="none" /><path d="M7 3h9q3 0 2 3l-2 7q-1 2-3 2H4q-3 0-2-3l2-6q1-3 3-3z" fill="#fff" stroke="#777" strokeWidth="1.500" /></I>
                  形状效果<Caret />
                </Small>
              </Stack>
            </Body>
            <Footer name="绘图" />
          </Group>
          <Rule />
          <Group $w={109}>
            <Body $left={9}>
              <Stack>
                <Small>
                  <I w={20} h={20}><circle cx="13" cy="7" r="5.500" stroke="#4565a8" strokeWidth="2.500" /><path d="M9 11l-8 7" stroke="#4565a8" strokeWidth="3.500" /></I>
                  查找
                </Small>
                <Small $far>
                  <I w={24} h={24}>
                    <path d="M2 4q5-2 5 1v5H4q-3-1-1-3h4" stroke="#555" strokeWidth="2" />
                    <path d="M11 0v10h3q3-3 0-5h-3" stroke="#8a5fa5" strokeWidth="2" />
                    <path d="M9 15q5-2 5 1v5h-3q-3-1-1-3h4" stroke="#444" strokeWidth="2" />
                    <path d="M23 15q-6-1-6 3t6 3" stroke="#4b6fb3" strokeWidth="2" />
                    <path d="M1 13v4h5M4 15l2 2-2 2" stroke="#4b6fb3" />
                  </I>
                  替换<Caret />
                </Small>
                <Small>
                  <I w={14} h={22}><path d="M1 1v17l4-4 3 7 3-1-3-7h5z" fill="#fff" stroke="#666" strokeWidth="1.500" /></I>
                  选择<Caret />
                </Small>
              </Stack>
            </Body>
            <Footer name="编辑" open={false} />
          </Group>
          <Rule />
          <Collapse aria-label="折叠功能区"><I w={12} h={8}><path d="M1 7l5-5 5 5" strokeWidth="2.500" /></I></Collapse>
        </Ribbon>

        <Work>
          <Pane>
            <List>
              {minis.map(([n, art]) => (
                <Item key={n} $on={n === 33}>
                  {n}
                  <Svg width="137" height="80" viewBox="0 0 137 80" aria-hidden="true">{art}</Svg>
                </Item>
              ))}
            </List>
            <Bars side a={551} b={85} h={140} />
          </Pane>
          <Right>
            <Editor>
              <Stage>
                <Slide>
                  <SlideHead>
                    <I w={60} h={56}>
                      <path d="M18 1l17 16-17 16L1 17z" stroke="#e5a93f" strokeWidth="2.500" />
                      <path d="M42 6l16 16-16 16-16-16z" fill="#fdfefe" stroke="#3d9c8b" strokeWidth="2.500" />
                      <path d="M24 26l15 15-15 15L9 41z" fill="#fdfefe" stroke="#3d9c8b" strokeWidth="2.500" />
                    </I>
                    <SlideTitle>双亲委派机制</SlideTitle>
                    <Brand><ULogo s={34} />尚硅谷</Brand>
                  </SlideHead>
                  <Stripe />
                  <SlideBody>
                    <TextBox>
                      <Heading>
                        <I w={22} h={22}><circle cx="11" cy="11" r="10.500" fill="#fb1605" stroke="none" /></I>
                        工作原理
                      </Heading>
                      {paras.map((lines, i) => (
                        <Para key={i}>
                          {lines.map((t, k) => (
                            <Line key={k}>
                              {k === 0 && <Num>{i + 1})</Num>}
                              {i === 2 && k === 1 && <Spot />}
                              <Over>{withSemi(t)}</Over>
                              {i === 2 && k === 1 && (
                                <Beam width="14" height="30" viewBox="0 0 14 30">
                                  <path d="M2 1q5 0 5 4v20q0 4-5 4M12 1q-5 0-5 4v20q0 4 5 4" stroke="#444" strokeWidth="3" />
                                  <path d="M7 5v20" stroke="#fff" strokeWidth="1" />
                                </Beam>
                              )}
                            </Line>
                          ))}
                        </Para>
                      ))}
                      <Rotate width="30" height="66" viewBox="0 0 30 66">
                        <path d="M15 28v30" stroke="#8f9599" strokeWidth="2" />
                        <path d="M22 23a11 11 0 1 1 4-9" stroke="#858585" strokeWidth="6" />
                        <path d="M22 23a11 11 0 1 1 4-9" stroke="#fff" strokeWidth="2" />
                        <path d="M20 13h16l-8 9z" fill="#eee" stroke="#858585" strokeWidth="2" />
                      </Rotate>
                      {[[0, 0], [50, 0], [100, 0], [0, 50], [100, 50], [0, 100], [50, 100], [100, 100]].map(([x, y]) => (
                        <Handle key={`${x}-${y}`} $x={x} $y={y} />
                      ))}
                    </TextBox>
                    <RightSide>
                      <Diagram>
                        <Arrows width="621" height="510" viewBox="0 0 621 510">
                          <defs>
                            <marker id="tip" markerWidth="12" markerHeight="10" refX="11" refY="4" orient="auto" markerUnits="userSpaceOnUse">
                              <path d="M0 0l11 4-11 4z" fill="#b8272d" />
                            </marker>
                          </defs>
                          {links.map(([a, b, d, e]) => (
                            <path key={`${a}-${b}`} d={`M${a} ${b}L${d} ${e}`} stroke="#c44a55" strokeWidth="1.500" markerEnd="url(#tip)" />
                          ))}
                        </Arrows>
                        {nodes.map(([x, y, cn, en]) => (
                          <Node key={x + y} $x={x} $y={y}>{cn}<span>{en}</span></Node>
                        ))}
                        <Note $x={223} $y={109} $s={18}>向上委托</Note>
                        <Note $x={227} $y={247} $s={18}>向上委托</Note>
                        <Note $x={490} $y={166} $s={16}>父类加载失败<br />交由子加载器<br />自己处理</Note>
                      </Diagram>
                      <Motto>让天下没有难学的技术</Motto>
                    </RightSide>
                  </SlideBody>
                </Slide>
              </Stage>
              <Bars a={476} b={135} h={24} />
            </Editor>
            <Notes><NotesBox aria-label="备注" placeholder="单击此处添加备注" /></Notes>
          </Right>
        </Work>

        <Status>
          <StatusText $w={235}>幻灯片 第 33 张 , 共 42 张</StatusText>
          <StatusBtn $w={26} aria-label="拼写检查"><I w={22} h={18}><path d="M10 3C8 1 4 1 1 2v13c3-1 7-1 9 1V3c2-2 4-2 7-1v4M10 16c1-1 2-1 3-1M14 9l6 7M20 9l-6 7" strokeWidth="1.500" /></I></StatusBtn>
          <StatusBtn $w={130}>中文(中国)</StatusBtn>
          <Push />
          <StatusBtn $w={88}><I w={18} h={18}><path d="M6 5h6L9 1z" fill="currentColor" stroke="none" /><path d="M0 8h18M0 12h14M0 16h10" strokeWidth="1.500" /></I>备注</StatusBtn>
          <StatusBtn $w={104}><I w={18} h={18}><path d="M0 1h18v11h-7l-4 6v-6H0z" fill="currentColor" stroke="none" /></I>批注</StatusBtn>
          <StatusBtn $w={55} $on aria-label="普通视图"><I w={22} h={18}><path d="M1 1h20v16H1zM6 1v16M6 13h15M10 5h7v5h-7zM2 5h4M2 9h4" strokeWidth="1.500" /></I></StatusBtn>
          <StatusBtn $w={56} aria-label="幻灯片浏览"><I w={20} h={18}><path d="M1 1h7v6H1zM12 1h7v6h-7zM1 11h7v6H1zM12 11h7v6h-7z" strokeWidth="1.500" /></I></StatusBtn>
          <StatusBtn $w={54} aria-label="阅读视图"><I w={20} h={18}><path d="M10 3C8 1 4 1 1 1v14c3 0 7 0 9 2 2-2 6-2 9-2V1c-3 0-7 0-9 2v14M3 5h5M3 8h5M3 11h5M12 5h5M12 8h5M12 11h5" strokeWidth="1.500" /></I></StatusBtn>
          <StatusBtn $w={56} aria-label="幻灯片放映"><I w={20} h={18}><path d="M0 1h20M2 1v8h16V1M10 9v7M5 17h10M7 13h6" strokeWidth="1.500" /></I></StatusBtn>
          <StatusBtn $w={22} aria-label="缩小"><I w={11} h={4}><path d="M0 2h11" strokeWidth="3" /></I></StatusBtn>
          <Zoom type="range" min={0} max={100} defaultValue={46} aria-label="显示比例" />
          <StatusBtn $w={15} aria-label="放大"><I w={13} h={13}><path d="M0 6h13M6 0v13" strokeWidth="2.500" /></I></StatusBtn>
          <StatusBtn $w={76}>91%</StatusBtn>
          <StatusBtn $w={20} aria-label="适应窗口"><I w={20} h={19}><path d="M1 1h18v17H1zM10 2v5M8 5l2 2 2-2M10 17v-5M8 14l2-2 2 2M2 9h5M5 7l2 2-2 2M18 9h-5M15 7l-2 2 2 2" strokeWidth="1.500" /></I></StatusBtn>
        </Status>
        <Orb />
        <Ime>
          <ULogo s={28} />
          <span>中</span>
          <I w={20} h={20}><path d="M14 1c6 8 0 20-13 16 8 0 13-7 13-16z" fill="currentColor" stroke="none" /></I>
          <I w={16} h={20}><circle cx="4" cy="5" r="3" strokeWidth="1.500" /><path d="M11 12h3c1 4 0 6-3 8 1-2 1-3 0-5z" fill="currentColor" stroke="none" /></I>
          <I w={24} h={18}><path d="M0 0h24v18H0z" fill="currentColor" stroke="none" /><path d="M3 4h18M3 8h18" stroke="#fff" strokeWidth="2" strokeDasharray="2 1" /><path d="M6 13h12" stroke="#fff" strokeWidth="2" /></I>
          <I w={16} h={20}><circle cx="8" cy="5" r="5" fill="currentColor" stroke="none" /><path d="M0 20c-1-11 17-11 16 0z" fill="currentColor" stroke="none" /></I>
          <I w={20} h={20}><path d="M2 18l9-9" strokeWidth="4" /><path d="M18 3l-4 4-2-2 3-4c-5-1-8 3-6 7s7 4 10 1c1-2 1-4-1-6z" fill="currentColor" stroke="none" /></I>
        </Ime>
      </Window>
    </Screen>
  );
}
